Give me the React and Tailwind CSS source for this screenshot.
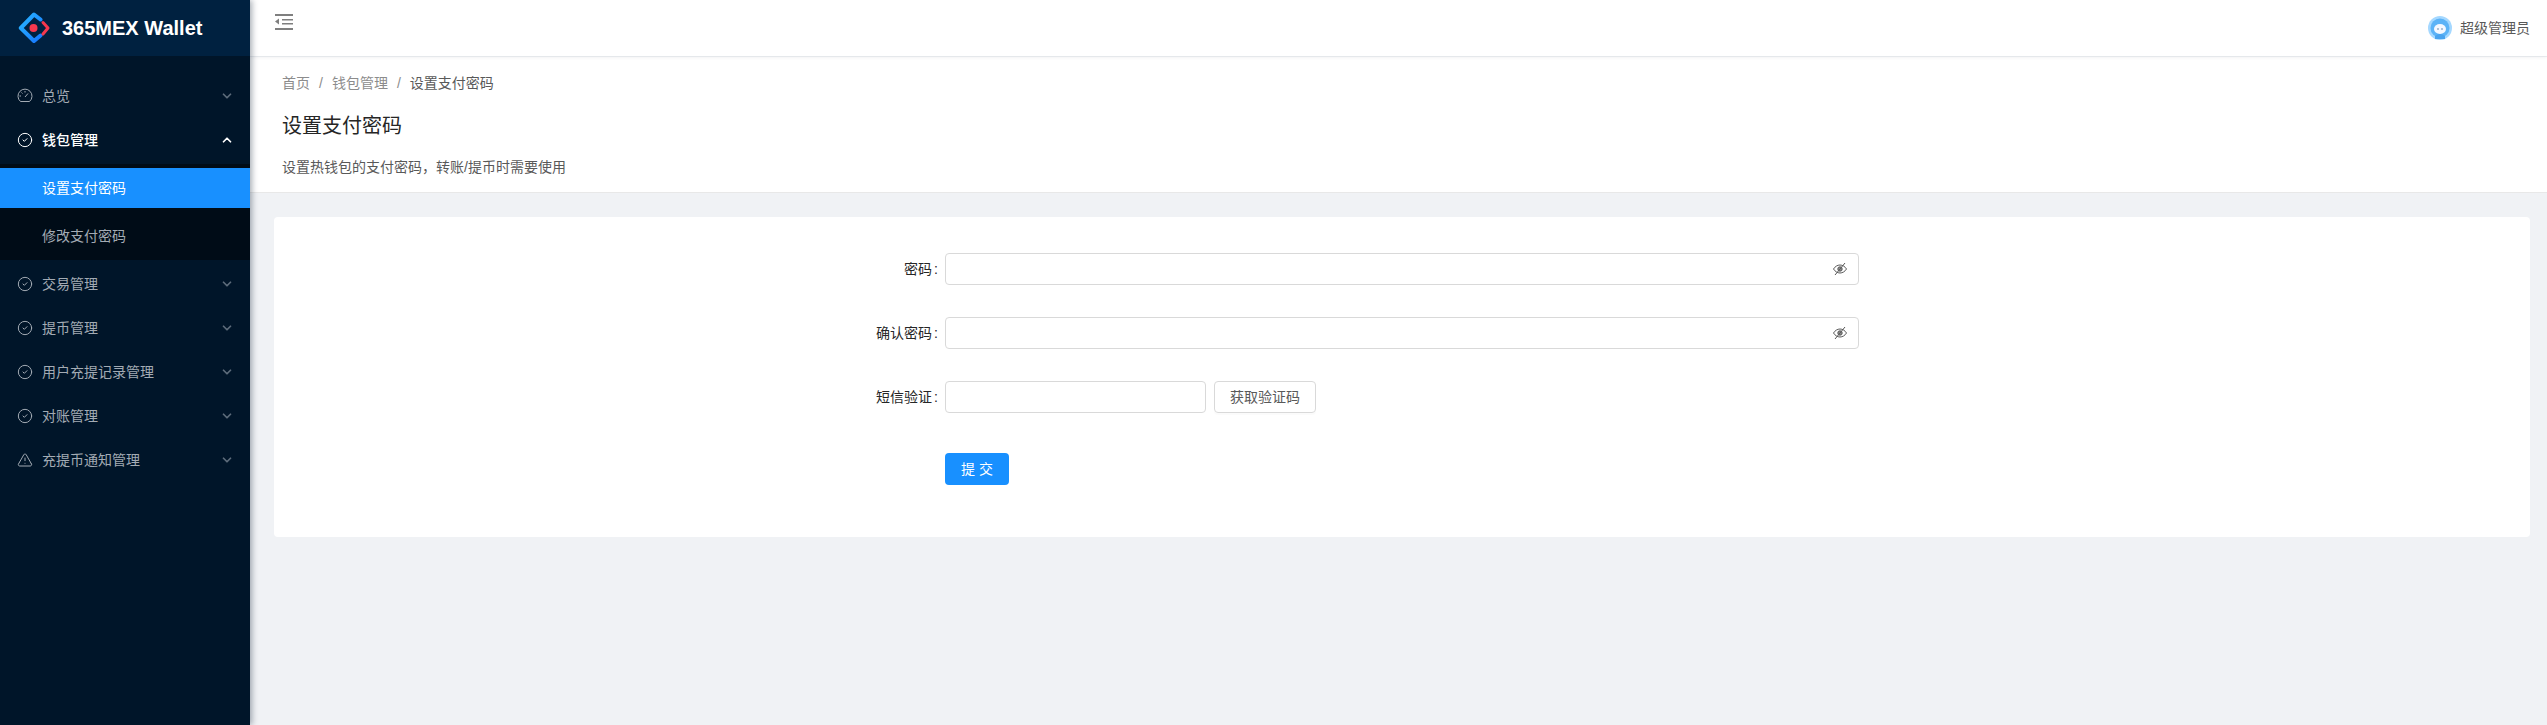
import { ChevronDown, ChevronUp, CircleCheck, TriangleAlert } from 'lucide-react';

function Logo() {
  return (
    <svg width="32" height="32" viewBox="0 0 32 32" className="shrink-0">
      <defs>
        <linearGradient id="logoBlue" x1="0" y1="0" x2="1" y2="1">
          <stop offset="0" stopColor="#29b6ff" />
          <stop offset="1" stopColor="#1677ff" />
        </linearGradient>
      </defs>
      <path d="M22.500 7.500 L16 2.500 L2.800 16 L16 29 L22.500 23.500" fill="none" stroke="url(#logoBlue)" strokeWidth="4" strokeLinejoin="round" strokeLinecap="round" />
      <path d="M25 10.500 L30 16 L25 22" fill="none" stroke="#f5384e" strokeWidth="3" strokeLinejoin="round" strokeLinecap="round" />
      <circle cx="15.500" cy="16" r="4" fill="#f5384e" />
    </svg>
  );
}

function DashboardIcon({ size, className }) {
  return (
    <svg width={size} height={size} viewBox="0 0 16 16" fill="none" stroke="currentColor" strokeWidth="1" className={className}>
      <path d="M3.500 13.500 A7 7 0 1 1 12.500 13.500 Z" strokeLinejoin="round" />
      <path d="M8 9 L11 5.500" />
      <path d="M2.500 8 H4 M8 3 V4.500 M4.500 4.500 L5.500 5.500" />
    </svg>
  );
}

function EyeInvisible() {
  return (
    <svg width="14" height="14" viewBox="0 0 14 14" fill="none" stroke="#595959" strokeWidth="1">
      <path d="M0.500 7 C2 4.500 4.500 3 7 3 C9.500 3 12 4.500 13.500 7 C12 9.500 9.500 11 7 11 C4.500 11 2 9.500 0.500 7 Z" />
      <circle cx="7" cy="7" r="2.200" fill="#8c8c8c" />
      <path d="M2 13 L12 1" />
    </svg>
  );
}

function MenuItem({ icon: Icon, label, open, active }) {
  const Arrow = open ? ChevronUp : ChevronDown;
  return (
    <div className={`flex items-center h-10 my-1 pl-[17px] pr-4 ${active ? 'text-white font-medium' : 'text-[#a3abb4]'}`}>
      <Icon size={16} strokeWidth={1.5} className="mr-[9px] shrink-0" />
      <span className="flex-1 text-sm leading-[22px]">{label}</span>
      <Arrow size={14} strokeWidth={3} className={active ? 'text-white' : 'text-[#5c6b7a]'} />
    </div>
  );
}

function SubItem({ label, active, last }) {
  return (
    <div className={`flex items-center h-10 pl-[42px] text-sm ${last ? '' : 'mb-2'} ${active ? 'bg-[#1890ff] text-white' : 'text-[#a3abb4]'}`}>
      {label}
    </div>
  );
}

function Sidebar() {
  return (
    <aside className="w-[250px] shrink-0 min-h-[725px] bg-[#001529] shadow-[2px_0_6px_rgba(0,21,41,0.35)] z-10">
      <div className="flex items-center h-14 pl-[18px] bg-[#002140]">
        <Logo />
        <span className="ml-3 text-white text-xl font-bold leading-none">365MEX Wallet</span>
      </div>
      <nav className="pt-4">
        <MenuItem icon={DashboardIcon} label="总览" />
        <MenuItem icon={CircleCheck} label="钱包管理" open active />
        <div className="bg-[#000c17] py-1">
          <SubItem label="设置支付密码" active />
          <SubItem label="修改支付密码" last />
        </div>
        <MenuItem icon={CircleCheck} label="交易管理" />
        <MenuItem icon={CircleCheck} label="提币管理" />
        <MenuItem icon={CircleCheck} label="用户充提记录管理" />
        <MenuItem icon={CircleCheck} label="对账管理" />
        <MenuItem icon={TriangleAlert} label="充提币通知管理" />
      </nav>
    </aside>
  );
}

function Avatar() {
  return (
    <svg width="24" height="24" viewBox="0 0 24 24" className="mr-2">
      <circle cx="12" cy="12" r="12" fill="#a5d8ff" />
      <circle cx="12" cy="12" r="9.500" fill="#5cb3f7" />
      <ellipse cx="12" cy="13" rx="6" ry="5" fill="#f4f8ff" />
      <path d="M8 4 L9.500 8 M16 4 L14.500 8" stroke="#5cb3f7" strokeWidth="2" />
      <path d="M7 20 Q12 16 17 20 L17 23 L7 23 Z" fill="#4aa3ee" />
      <circle cx="10" cy="13" r="0.800" fill="#5a7aa0" />
      <circle cx="14" cy="13" r="0.800" fill="#5a7aa0" />
    </svg>
  );
}

function Header() {
  return (
    <header className="flex items-center justify-between h-14 bg-white shadow-[0_1px_4px_rgba(0,21,41,0.08)] relative">
      <div className="self-start pt-[14px] pl-[25px]">
        <svg width="18" height="16" viewBox="0 0 18 16" fill="#7f7f7f">
          <rect x="0" y="0" width="18" height="2" />
          <rect x="7" y="5" width="11" height="1.500" />
          <rect x="7" y="9" width="11" height="1.500" />
          <rect x="0" y="14" width="18" height="2" />
          <path d="M4 4.500 L0 7.500 L4 10.500 Z" />
        </svg>
      </div>
      <div className="flex items-center pr-[17px] text-sm text-[#595959]">
        <Avatar />
        超级管理员
      </div>
    </header>
  );
}

function PageHeader() {
  return (
    <div className="bg-white h-[136px] mt-px border-b border-[#e8e8e8] px-8 pt-4">
      <div className="flex items-center h-[22px] -translate-y-px text-sm text-[#8c8c8c]">
        <span>首页</span>
        <span className="mx-[9px]">/</span>
        <span>钱包管理</span>
        <span className="mx-[9px]">/</span>
        <span className="text-[#595959]">设置支付密码</span>
      </div>
      <h1 className="mt-[15px] text-xl leading-8 text-[#262626] font-normal">设置支付密码</h1>
      <p className="mt-[14px] text-sm leading-[22px] text-[#595959]">设置热钱包的支付密码，转账/提币时需要使用</p>
    </div>
  );
}

function Label({ children }) {
  return (
    <label className="flex justify-end items-center h-8 pr-[7px] text-sm text-[#262626]">
      {children}
      <span className="ml-0.5">:</span>
    </label>
  );
}

function PasswordField() {
  return (
    <div className="flex items-center justify-end h-8 border border-[#d9d9d9] rounded-[4px] bg-white pr-[11px]">
      <EyeInvisible />
    </div>
  );
}

function Form() {
  return (
    <div className="ml-6 mr-[17px] mt-6 h-[320px] bg-white rounded-sm pt-9">
      <div className="grid grid-cols-[671px_914px] gap-y-8">
        <Label>密码</Label>
        <PasswordField />
        <Label>确认密码</Label>
        <PasswordField />
        <Label>短信验证</Label>
        <div className="flex items-center gap-2">
          <div className="w-[261px] h-8 border border-[#d9d9d9] rounded-[4px]" />
          <button className="w-[102px] h-8 border border-[#d9d9d9] rounded-[4px] text-sm text-[#595959] shadow-[0_2px_0_rgba(0,0,0,0.015)]">
            获取验证码
          </button>
        </div>
        <div />
        <button className="mt-2 w-16 h-8 rounded-[4px] bg-[#1890ff] text-white text-sm">提 交</button>
      </div>
    </div>
  );
}

export default function App() {
  return (
    <div className='flex min-h-[725px] bg-[#f0f2f5] font-["Liberation_Sans","Noto_Sans_CJK_SC",sans-serif]'>
      <Sidebar />
      <main className="flex-1 min-w-0">
        <Header />
        <PageHeader />
        <Form />
      </main>
    </div>
  );
}
